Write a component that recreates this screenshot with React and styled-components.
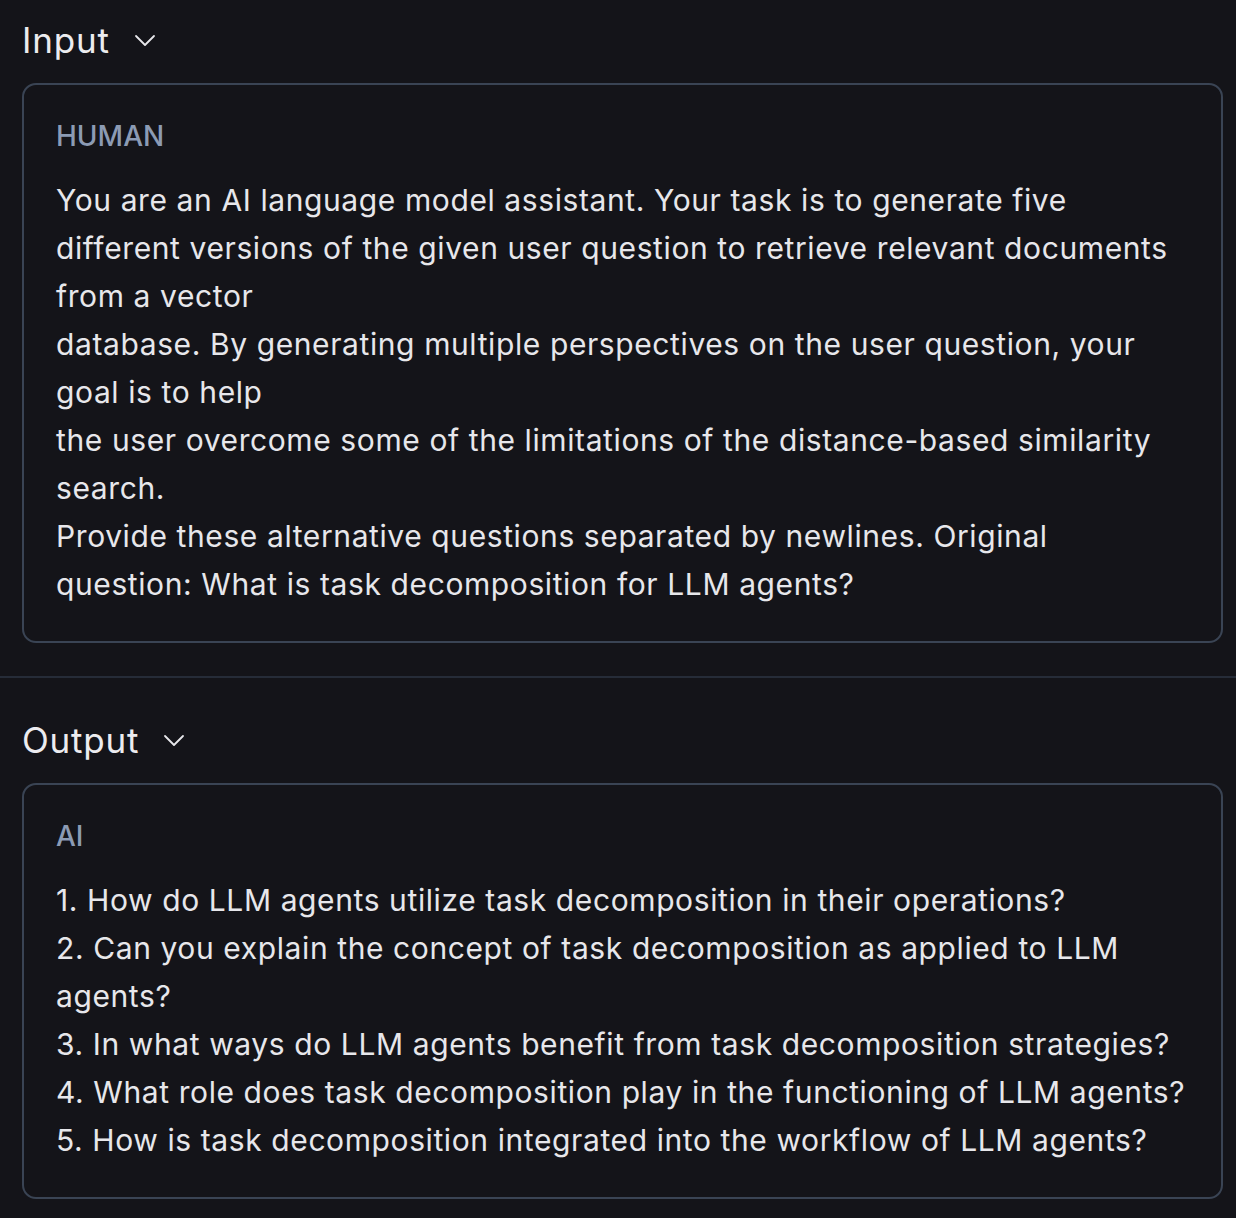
import styled, { createGlobalStyle } from 'styled-components';

const GlobalStyle = createGlobalStyle`
  html, body {
    margin: 0;
    padding: 0;
    background: #141419;
  }
  body {
    font-family: "Inter", "Noto Sans", sans-serif;
    color: #e7e7eb;
  }
`;

const sections = [
  {
    title: 'Input',
    role: 'HUMAN',
    text: `You are an AI language model assistant. Your task is to generate five
different versions of the given user question to retrieve relevant documents
from a vector
database. By generating multiple perspectives on the user question, your
goal is to help
the user overcome some of the limitations of the distance-based similarity
search.
Provide these alternative questions separated by newlines. Original
question: What is task decomposition for LLM agents?`,
  },
  {
    title: 'Output',
    role: 'AI',
    text: `1. How do LLM agents utilize task decomposition in their operations?
2. Can you explain the concept of task decomposition as applied to LLM
agents?
3. In what ways do LLM agents benefit from task decomposition strategies?
4. What role does task decomposition play in the functioning of LLM agents?
5. How is task decomposition integrated into the workflow of LLM agents?`,
  },
];

const Chevron = () => (
  <svg width="22" height="14" viewBox="0 0 22 14" fill="none">
    <path d="M2 3l9 9 9-9" stroke="#e7e7eb" strokeWidth="1.8" strokeLinecap="round" strokeLinejoin="round" />
  </svg>
);

const App = () => {
  return (
    <>
      <GlobalStyle />
      <Page>
        {sections.map((s, i) => (
          <Section key={s.title} first={i === 0}>
            <Heading>
              <span>{s.title}</span>
              <Chevron />
            </Heading>
            <Card>
              <Role>{s.role}</Role>
              <Body>{s.text}</Body>
            </Card>
          </Section>
        ))}
      </Page>
    </>
  );
};

export default App;

const Page = styled.div`
  display: flex;
  flex-direction: column;
  width: 1236px;
`;

const Section = styled.section`
  display: flex;
  flex-direction: column;
  gap: 19px;
  padding: ${(p) => (p.first ? '16px 13px 33px 22px' : '38px 13px 20px 22px')};
  border-top: ${(p) => (p.first ? 'none' : '2px solid #262c38')};
`;

const Heading = styled.div`
  display: flex;
  align-items: center;
  gap: 24px;
  height: 48px;
  font-size: 35px;
  font-weight: 400;
  color: #ececef;
  letter-spacing: 0.8px;
`;

const Card = styled.div`
  display: flex;
  flex-direction: column;
  gap: 20px;
  border: 2px solid #3a4454;
  border-radius: 14px;
  padding: 31px 32px 33px 32px;
`;

const Role = styled.div`
  font-size: 28px;
  line-height: 40px;
  color: #8c9bb4;
  font-weight: 500;
`;

const Body = styled.div`
  font-size: 30px;
  line-height: 48px;
  white-space: pre-wrap;
  color: #e7e7eb;
  letter-spacing: 0.6px;
`;
